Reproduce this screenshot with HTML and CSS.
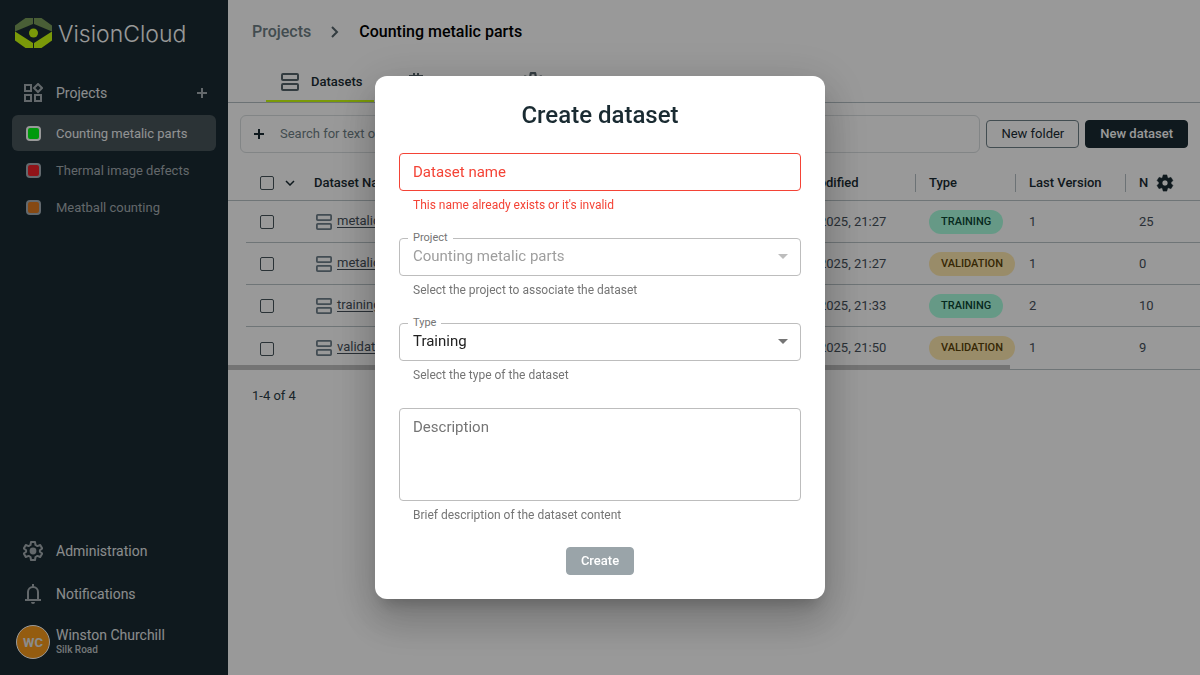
FILE: index.html
```html
<!DOCTYPE html>
<html lang="en">
<head>
<meta charset="utf-8">
<title>VisionCloud</title>
<link rel="stylesheet" href="styles.css">
</head>
<body>
<svg class="sprite" aria-hidden="true">
  <symbol id="gear" viewBox="0 0 24 24"><path fill="currentColor" stroke="currentColor" stroke-width=".8" d="M19.14 12.94c.04-.3.06-.61.06-.94 0-.32-.02-.64-.07-.94l2.03-1.58c.18-.14.23-.41.12-.61l-1.92-3.32c-.12-.22-.37-.29-.59-.22l-2.39.96c-.5-.38-1.03-.7-1.62-.94l-.36-2.54c-.04-.24-.24-.41-.48-.41h-3.84c-.24 0-.43.17-.47.41l-.36 2.54c-.59.24-1.13.57-1.62.94l-2.39-.96c-.22-.08-.47 0-.59.22L2.74 8.87c-.12.21-.08.47.12.61l2.03 1.58c-.05.3-.09.63-.09.94s.02.64.07.94l-2.03 1.58c-.18.14-.23.41-.12.61l1.92 3.32c.12.22.37.29.59.22l2.39-.96c.5.38 1.03.7 1.62.94l.36 2.54c.05.24.24.41.48.41h3.84c.24 0 .44-.17.47-.41l.36-2.54c.59-.24 1.13-.56 1.62-.94l2.39.96c.22.08.47 0 .59-.22l1.92-3.32c.12-.22.07-.47-.12-.61l-2.01-1.58zM12 15.600c-1.980 0-3.600-1.620-3.600-3.600s1.620-3.600 3.600-3.600 3.600 1.620 3.600 3.600-1.620 3.600-3.600 3.600z"/></symbol>
  <symbol id="gear-line" viewBox="2 2 20 20"><path fill="none" stroke="currentColor" stroke-width="2" stroke-linejoin="round" d="M10 3h4l.5 3 1.900 1.100 2.800-1.100 2 3.400-2.300 1.900v1.400l2.300 1.900-2 3.400-2.800-1.100-1.900 1.100-.5 3h-4l-.5-3-1.900-1.100L4.800 18l-2-3.400 2.300-1.900v-1.400L2.800 9.400l2-3.400 2.800 1.100L9.500 6z"/><circle cx="12" cy="12" r="3.400" fill="currentColor"/></symbol>
  <symbol id="stack" viewBox="0 0 18 18"><g fill="none" stroke="currentColor" stroke-width="2"><rect x="1" y="1" width="16" height="6" rx="1"/><rect x="1" y="11" width="16" height="6" rx="1"/></g></symbol>
  <symbol id="plus" viewBox="0 0 10 10"><path fill="none" stroke="currentColor" stroke-width="2" d="M5 0v10M0 5h10"/></symbol>
</svg>

<div class="app">
  <nav class="sidebar" aria-label="Main">
    <a class="brand" href="#">
      <svg class="brand-mark" viewBox="0 0 37 30" aria-hidden="true">
        <g fill="#7a9d5a"><path d="M0 7.500 10.500 0h7.500v6L0 13.500z"/><path d="M37 7.500 26.500 0H19v6l18 7.500z"/></g>
        <g fill="#cbff10"><path d="M0 13.500 18 25v5h-7.500L0 22.500z"/><path d="M37 13.500 19 25v5h7.500L37 22.500z"/><circle cx="18.500" cy="15" r="4.500"/></g>
      </svg>
      <span>VisionCloud</span>
    </a>
    <div class="nav-row nav-projects">
      <a class="nav-link" href="#">
        <svg class="icon-20" viewBox="0 0 20 20" aria-hidden="true"><g fill="none" stroke="currentColor" stroke-width="2"><rect x="2" y="2" width="6" height="6"/><rect x="2" y="12" width="6" height="6"/><rect x="12" y="12" width="6" height="6"/><path d="m15 1 4 4-4 4-4-4z"/></g></svg>
        <span>Projects</span>
      </a>
      <button class="plain add" aria-label="Add project"><svg class="icon-10" aria-hidden="true"><use href="#plus"/></svg></button>
    </div>
    <ul class="projects">
      <li><a class="project active" href="#"><span class="swatch green"></span>Counting metalic parts</a></li>
      <li><a class="project" href="#"><span class="swatch red"></span>Thermal image defects</a></li>
      <li><a class="project" href="#"><span class="swatch orange"></span>Meatball counting</a></li>
    </ul>
    <div class="nav-bottom">
      <a class="nav-link" href="#"><svg class="icon-20" aria-hidden="true"><use href="#gear-line"/></svg><span>Administration</span></a>
      <a class="nav-link" href="#"><svg class="icon-20" viewBox="0 0 20 20" aria-hidden="true"><path fill="none" stroke="currentColor" stroke-width="2" d="M5 16V8a5 5 0 0 1 10 0v8M2 16h16M10 3V0"/><path fill="currentColor" d="M8 18h4a2 2 0 0 1-4 0z"/></svg><span>Notifications</span></a>
      <a class="user" href="#"><span class="avatar">WC</span><span class="user-text"><span>Winston Churchill</span><small>Silk Road</small></span></a>
    </div>
  </nav>

  <main class="main">
    <header class="crumbs">
      <a href="#">Projects</a>
      <svg class="crumb-arrow" viewBox="0 0 8 12" aria-hidden="true"><path fill="none" stroke="currentColor" stroke-width="2" d="m1 1 5 5-5 5"/></svg>
      <h1>Counting metalic parts</h1>
    </header>
    <div class="tabs" role="tablist">
      <button class="tab selected" role="tab" aria-selected="true"><svg class="icon-18" aria-hidden="true"><use href="#stack"/></svg>Datasets</button>
      <button class="tab" role="tab" aria-label="Models"><svg class="icon-20" viewBox="0 0 20 20" aria-hidden="true"><path fill="none" stroke="currentColor" stroke-width="2" d="M4 3h12v14H4zM8 0v3M12 0v3M8 17v3M12 17v3M1 8h3M1 12h3M16 8h3M16 12h3"/></svg></button>
      <button class="tab" role="tab" aria-label="Settings"><svg class="icon-22" aria-hidden="true"><use href="#gear-line"/></svg></button>
    </div>
    <div class="toolbar">
      <div class="search">
        <svg class="icon-10" aria-hidden="true"><use href="#plus"/></svg>
        <input type="text" placeholder="Search for text or filters" aria-label="Search">
      </div>
      <button class="btn outline">New folder</button>
      <button class="btn solid">New dataset</button>
    </div>
    <div class="table-wrap">
      <table class="grid">
        <colgroup><col class="c-check"><col class="c-name"><col class="c-date"><col class="c-type"><col class="c-version"><col></colgroup>
        <thead>
          <tr>
            <th><span class="check-head"><input type="checkbox" aria-label="Select all"><svg class="chevron" viewBox="0 0 10 6" aria-hidden="true"><path fill="none" stroke="currentColor" stroke-width="1.500" d="m1 1 4 4 4-4"/></svg></span></th>
            <th>Dataset Name</th><th>Last Modified</th><th class="sep">Type</th><th class="sep">Last Version</th>
            <th class="sep"><span class="last-head"><span>N</span><button class="plain" aria-label="Columns"><svg class="icon-20" aria-hidden="true"><use href="#gear"/></svg></button></span></th>
          </tr>
        </thead>
        <tbody>
          <tr><td><input type="checkbox" aria-label="Select row"></td><td><a class="name" href="#"><svg class="icon-16" aria-hidden="true"><use href="#stack"/></svg><span>metalic_01</span></a></td><td>12/02/2025, 21:27</td><td><span class="chip training">TRAINING</span></td><td>1</td><td>25</td></tr>
          <tr><td><input type="checkbox" aria-label="Select row"></td><td><a class="name" href="#"><svg class="icon-16" aria-hidden="true"><use href="#stack"/></svg><span>metalic_02</span></a></td><td>12/02/2025, 21:27</td><td><span class="chip validation">VALIDATION</span></td><td>1</td><td>0</td></tr>
          <tr><td><input type="checkbox" aria-label="Select row"></td><td><a class="name" href="#"><svg class="icon-16" aria-hidden="true"><use href="#stack"/></svg><span>training</span></a></td><td>12/02/2025, 21:33</td><td><span class="chip training">TRAINING</span></td><td>2</td><td>10</td></tr>
          <tr><td><input type="checkbox" aria-label="Select row"></td><td><a class="name" href="#"><svg class="icon-16" aria-hidden="true"><use href="#stack"/></svg><span>validation</span></a></td><td>12/02/2025, 21:50</td><td><span class="chip validation">VALIDATION</span></td><td>1</td><td>9</td></tr>
        </tbody>
      </table>
      <div class="scrollbar"></div>
    </div>
    <p class="pager">1-4 of 4</p>
  </main>
</div>

<div class="overlay">
  <form class="dialog" role="dialog" aria-modal="true" aria-labelledby="dialog-title">
    <h2 id="dialog-title">Create dataset</h2>
    <div class="field error">
      <input class="box" type="text" placeholder="Dataset name" aria-label="Dataset name" aria-describedby="name-help">
      <p id="name-help">This name already exists or it's invalid</p>
    </div>
    <div class="field">
      <label for="project">Project</label>
      <select class="box" id="project" disabled><option>Counting metalic parts</option></select>
      <svg class="caret faded" viewBox="0 0 10 5" aria-hidden="true"><path fill="currentColor" d="M0 0h10L5 5z"/></svg>
      <p>Select the project to associate the dataset</p>
    </div>
    <div class="field">
      <label for="type">Type</label>
      <select class="box" id="type"><option>Training</option></select>
      <svg class="caret" viewBox="0 0 10 5" aria-hidden="true"><path fill="currentColor" d="M0 0h10L5 5z"/></svg>
      <p>Select the type of the dataset</p>
    </div>
    <div class="field">
      <textarea class="box" placeholder="Description" aria-label="Description"></textarea>
      <p>Brief description of the dataset content</p>
    </div>
    <button class="btn create" type="submit" disabled>Create</button>
  </form>
</div>
</body>
</html>
```
FILE: styles.css
```css
* { box-sizing: border-box; }
body { margin: 0; font: 13px/18px Roboto, "Liberation Sans", sans-serif; color: #1a2b32; background: #fff; }
a { color: inherit; text-decoration: none; }
h1, h2, p, ul { margin: 0; padding: 0; }
ul { list-style: none; }
button, input, select, textarea { font: inherit; color: inherit; }
svg { display: block; flex: none; }
.sprite { position: absolute; width: 0; height: 0; }
.icon-10 { width: 10px; height: 10px; }
.icon-16 { width: 16px; height: 16px; }
.icon-18 { width: 18px; height: 18px; }
.icon-20 { width: 20px; height: 20px; }
.icon-22 { width: 22px; height: 22px; }
.plain { border: 0; padding: 0; background: none; }

.app { display: flex; min-height: 100vh; }
.sidebar { width: 228px; flex: none; display: flex; flex-direction: column; padding: 18px 12px 16px; background: #1a2b32; color: #e6e9eb; }
.brand { display: flex; align-items: center; gap: 6px; height: 30px; padding-left: 3px; font: 300 23px/30px Inter, Roboto, sans-serif; color: #fff; }
.brand-mark { width: 37px; height: 30px; }
.brand span { padding-top: 2px; }
.nav-row { display: flex; align-items: center; justify-content: space-between; }
.nav-projects { margin-top: 33px; padding-right: 9px; }
.nav-link { display: flex; align-items: center; gap: 13px; height: 24px; padding-left: 11px; font-size: 14px; }
.nav-link svg, .add { color: #a5adb2; }
.projects { display: flex; flex-direction: column; gap: 1px; margin-top: 10px; }
.project { display: flex; align-items: center; gap: 15px; height: 36px; padding: 1px 0 0 14px; border-radius: 6px; color: #a5adb2; }
.project.active { background: #48555b; color: #f2f4f5; }
.swatch { width: 15px; height: 15px; border: 2px solid #a5b0b8; border-radius: 4px; }
.active .swatch { border-color: #fff; }
.green { background: #00ff14; }
.red { background: #f02128; }
.orange { background: #e07a20; }
.nav-bottom { display: flex; flex-direction: column; gap: 19px; margin-top: auto; }
.user { display: flex; align-items: center; gap: 6px; padding-left: 4px; font-size: 14px; }
.avatar { width: 34px; height: 34px; border: 1px solid #fff; border-radius: 50%; background: #f79a1c; font-size: 13px; font-weight: 700; line-height: 33px; text-align: center; }
.user-text { display: flex; flex-direction: column; padding-bottom: 2px; }
.user-text small { font-size: 10px; font-weight: 500; line-height: 12px; color: #c3c9cc; }

.main { flex: 1; min-width: 0; overflow: hidden; }
.crumbs { display: flex; align-items: center; height: 63px; padding-left: 24px; font-size: 16px; font-weight: 500; color: #6f7f86; }
.crumbs h1 { font: inherit; color: #000; }
.crumb-arrow { width: 8px; height: 12px; margin: 0 20px; color: #56656c; }
.tabs { display: flex; height: 40px; padding-left: 38px; border-bottom: 1px solid #b4bfc4; }
.tab { display: flex; align-items: center; gap: 12px; width: 116px; padding: 0 16px; border: 0; background: none; font-weight: 500; color: #56656c; }
.tab.selected { width: 108px; margin-right: 16px; padding: 1px 0 0 15px; border-bottom: 2px solid #cbff10; color: #1a2b32; }
.tab.selected svg { color: #56656c; }
.toolbar { display: flex; align-items: center; gap: 6px; padding: 12px; }
.search { flex: 1; display: flex; align-items: center; gap: 16px; height: 38px; padding: 0 13px; border: 1px solid #d9dee0; border-radius: 6px; }
.search input { flex: 1; border: 0; padding: 0; background: none; outline: 0; }
.search input::placeholder { color: #6f7f86; }
.btn { height: 28px; padding: 0 14px; border: 1px solid #6f8087; border-radius: 4px; background: #fff; font-size: 13px; font-weight: 500; }
.btn.outline { font-weight: 400; }
.btn.solid { border-color: #1a2b32; background: #1a2b32; color: #fff; }

.table-wrap { position: relative; }
.grid { width: 100%; table-layout: fixed; border-collapse: separate; border-spacing: 0; }
.c-check { width: 72px; }
.c-name { width: 465px; }
.c-date { width: 150px; }
.c-type { width: 100px; }
.c-version { width: 110px; }
.grid th { height: 36px; padding: 0 0 0 14px; border-bottom: 1px solid #b9c3c7; text-align: left; font-weight: 500; }
.grid td { height: 42px; padding: 0 0 0 14px; border-bottom: 1px solid #b9c3c7; color: #46505a; }
.grid td:first-child { border-bottom: 0; background: linear-gradient(#b9c3c7, #b9c3c7) 18px bottom / 100% 1px no-repeat; }
.grid th:first-child, .grid td:first-child { padding-left: 32px; }
.grid tbody tr:last-child td { height: 43px; }
.grid .sep { background: linear-gradient(#b4bfc4, #b4bfc4) left center / 1px 18px no-repeat; }
.grid input { appearance: none; display: block; width: 14px; height: 14px; margin: 0; border: 1px solid #46545b; border-radius: 2px; }
.check-head { display: flex; align-items: center; gap: 11px; }
.chevron { width: 10px; height: 6px; }
.last-head { display: flex; align-items: center; gap: 7px; }
.name { display: flex; align-items: center; gap: 5px; padding-left: 2px; }
.name svg { color: #6f7f8a; }
.name span { padding-bottom: 2px; text-decoration: underline; text-underline-offset: 2px; }
.chip { display: inline-block; height: 24px; padding: 0 12px; border-radius: 12px; font-size: 11px; font-weight: 500; line-height: 23px; vertical-align: middle; }
.training { background: #aaffe0; color: #0b4634; }
.validation { background: #ffeab0; color: #5a4207; }
.scrollbar { position: absolute; left: 0; bottom: 0; width: 782px; height: 5px; background: #c1c1c1; }
.pager { padding: 17px 24px; color: #2c3d46; }

.overlay { position: fixed; inset: 0; display: flex; align-items: center; justify-content: center; background: rgba(0, 0, 0, .4); }
.dialog { display: flex; flex-direction: column; width: 450px; padding: 24px; border-radius: 12px; background: #fff; box-shadow: 0 11px 15px -7px rgba(0, 0, 0, .2), 0 24px 38px 3px rgba(0, 0, 0, .14), 0 9px 46px 8px rgba(0, 0, 0, .12); }
.dialog h2 { margin-bottom: 23px; font-size: 24px; line-height: 30px; font-weight: 500; text-align: center; }
.field { position: relative; margin-bottom: 24px; }
.box { display: block; width: 100%; height: 38px; padding: 0 13px; border: 1px solid #bdbdbd; border-radius: 4px; outline: 0; background: #fff; font-size: 15px; color: #212121; }
select.box { appearance: none; padding-bottom: 2px; }
select.box:disabled { color: #9e9e9e; opacity: 1; }
textarea.box { height: 93px; padding-top: 9px; resize: none; }
.box::placeholder { color: #757575; }
.field label { position: absolute; left: 9px; top: -9px; padding: 0 5px; background: #fff; font-size: 11px; color: #757575; }
.field p { margin-top: 5px; padding-left: 14px; font-size: 12px; line-height: 18px; color: #757575; }
.error .box { border-color: #f44336; }
.error .box::placeholder, .error p { color: #f44336; }
.caret { position: absolute; right: 13px; top: 16px; width: 10px; height: 5px; color: #757575; pointer-events: none; }
.caret.faded { color: #bdbdbd; }
.field:last-of-type { margin-bottom: 23px; }
.btn.create { align-self: center; border-color: #9aa4a9; background: #9aa4a9; color: #fff; }
```
